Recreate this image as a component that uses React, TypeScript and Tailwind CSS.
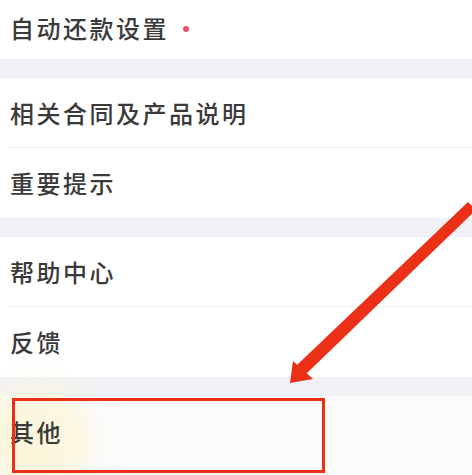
import React from 'react';

const Label = ({ children }: { children: React.ReactNode }) => (
  <span className="text-[24px] leading-none tracking-[2.5px] font-medium text-[#3a3a3a]">{children}</span>
);

const Row = ({ label, divider }: { label: string; divider?: boolean }) => (
  <div className="bg-white">
    <div className={`flex items-center h-[70px] ${divider ? 'border-b border-[#eeeef0] ml-[8px] pl-[2px]' : 'pl-[10px]'}`}>
      <Label>{label}</Label>
    </div>
  </div>
);

const Gap = () => <div className="h-[19px] bg-[#f2f2f6]" />;

export default function App() {
  return (
    <div
      className="relative w-[472px] h-[475px] overflow-hidden bg-white"
      style={{ fontFamily: '"Noto Sans CJK SC", "Noto Sans", sans-serif' }}
    >
      <div className="flex flex-col">
        <div className="h-[59px] flex items-center pl-[10px] pb-[3px] bg-white">
          <Label>自动还款设置</Label>
          <span className="ml-[14px] mt-[2px] w-[6px] h-[6px] rounded-full bg-[#e3546d]" />
        </div>
        <Gap />
        <Row label="相关合同及产品说明" divider />
        <Row label="重要提示" />
        <Gap />
        <Row label="帮助中心" divider />
        <Row label="反馈" />
        <Gap />
        <div className="relative h-[80px] flex items-center pl-[10px] pb-[6px] bg-[#fbfbfc]">
          <div className="absolute left-[-20px] top-[-10px] w-[110px] h-[110px] rounded-full bg-[#fbf6dc] blur-[14px]" />
          <span className="relative">
            <Label>其他</Label>
          </span>
        </div>
      </div>

      {/* annotation */}
      <div className="absolute left-[12px] top-[398px] w-[313px] h-[75px] border-[3px] border-[#ec2f17]" />
      <svg className="absolute left-0 top-0" width="472" height="475" viewBox="0 0 472 475">
        <polygon points="468,202 476,210 306,374 297,365" fill="#ec2f17" />
        <polygon points="290,383 293,361 313,379" fill="#ec2f17" />
      </svg>
    </div>
  );
}
